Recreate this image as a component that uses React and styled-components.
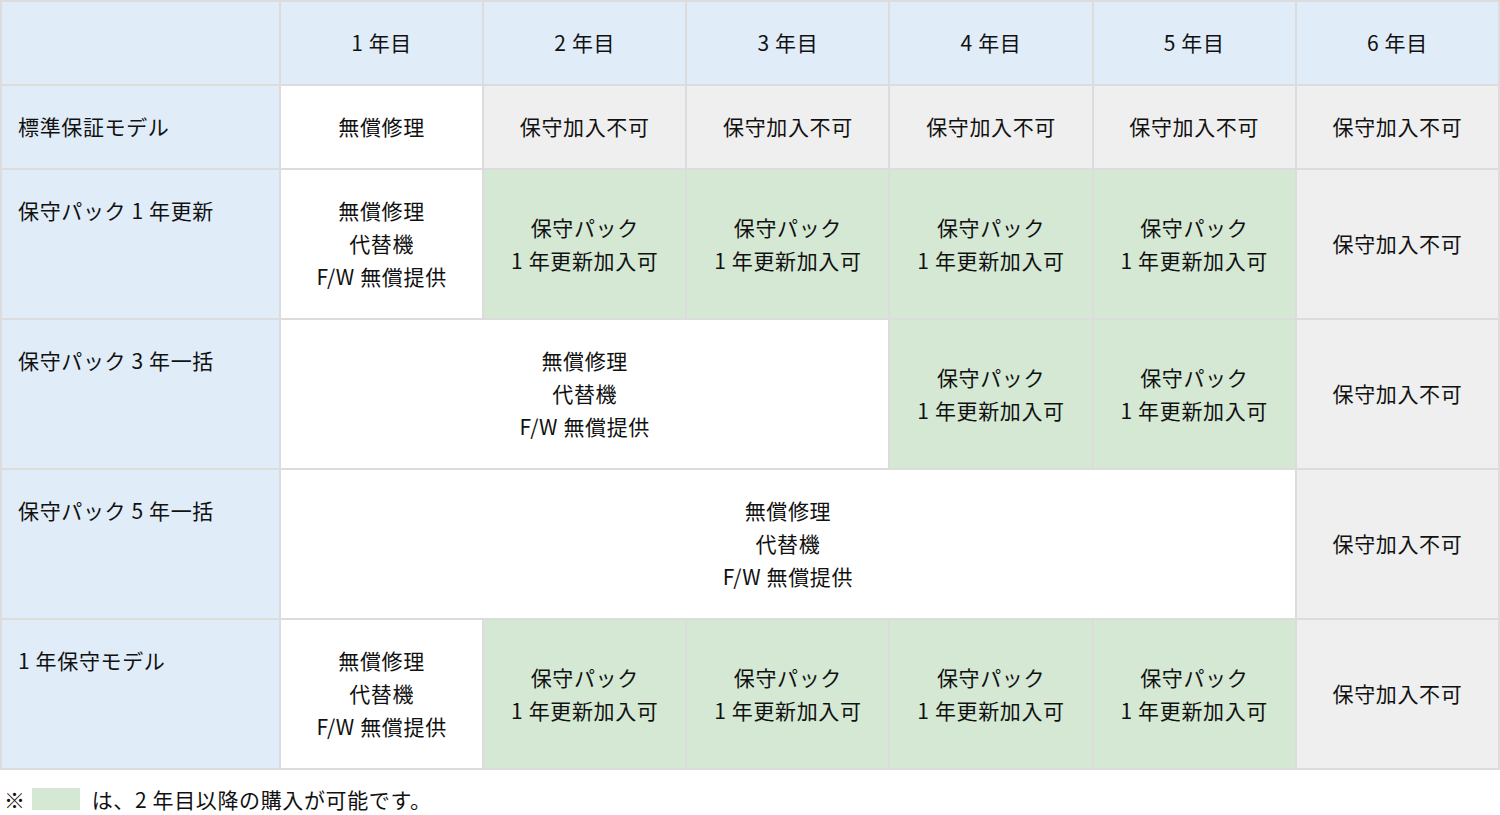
import React from "react";
import styled, { createGlobalStyle } from "styled-components";

const GlobalStyle = createGlobalStyle`
  body {
    margin: 0;
    background: #fff;
    font-family: "Noto Sans CJK JP", "Noto Sans", sans-serif;
    color: #111;
  }
`;

const Table = styled.table`
  width: 1500px;
  border-collapse: collapse;
  table-layout: fixed;
  font-size: 21px;
  line-height: 33px;
  letter-spacing: 0.03em;
`;

const HeadCell = styled.th`
  background: #e0ecf8;
  border: 2px solid #dcdcdc;
  font-weight: normal;
  padding: 24px 0 25px;
  text-align: center;
  vertical-align: middle;
`;

const RowHead = styled.th`
  background: #e0ecf8;
  border: 2px solid #dcdcdc;
  font-weight: normal;
  padding: 24px 16px 25px;
  text-align: left;
  vertical-align: top;
`;

const tones = {
  white: "#ffffff",
  gray: "#efefef",
  green: "#d4e8d4",
};

const Cell = styled.td`
  background: ${(p) => tones[p.$tone || "white"]};
  border: 2px solid #dcdcdc;
  padding: 24px 0 25px;
  text-align: center;
  vertical-align: middle;
`;

const Note = styled.p`
  margin: 16px 0 0 4px;
  font-size: 21px;
  line-height: 26px;
  letter-spacing: 0.03em;
  display: flex;
  align-items: center;
`;

const Swatch = styled.span`
  display: inline-block;
  width: 48px;
  height: 22px;
  background: #d4e8d4;
  margin: 0 12px 0 6px;
`;

const Lines = ({ items }) =>
  items.map((t, i) => (
    <React.Fragment key={i}>
      {i > 0 && <br />}
      {t}
    </React.Fragment>
  ));

const FREE = ["無償修理", "代替機", "F/W 無償提供"];
const PACK = ["保守パック", "1 年更新加入可"];
const NO = "保守加入不可";

export default function App() {
  const years = ["1 年目", "2 年目", "3 年目", "4 年目", "5 年目", "6 年目"];
  return (
    <>
      <GlobalStyle />
      <Table>
        <colgroup>
          <col style={{ width: 279 }} />
          {years.map((y) => (
            <col key={y} />
          ))}
        </colgroup>
        <thead>
          <tr>
            <HeadCell />
            {years.map((y) => (
              <HeadCell key={y}>{y}</HeadCell>
            ))}
          </tr>
        </thead>
        <tbody>
          <tr>
            <RowHead>標準保証モデル</RowHead>
            <Cell>無償修理</Cell>
            <Cell $tone="gray">{NO}</Cell>
            <Cell $tone="gray">{NO}</Cell>
            <Cell $tone="gray">{NO}</Cell>
            <Cell $tone="gray">{NO}</Cell>
            <Cell $tone="gray">{NO}</Cell>
          </tr>
          <tr>
            <RowHead>保守パック 1 年更新</RowHead>
            <Cell><Lines items={FREE} /></Cell>
            {[0, 1, 2, 3].map((i) => (
              <Cell key={i} $tone="green"><Lines items={PACK} /></Cell>
            ))}
            <Cell $tone="gray">{NO}</Cell>
          </tr>
          <tr>
            <RowHead>保守パック 3 年一括</RowHead>
            <Cell colSpan={3}><Lines items={FREE} /></Cell>
            <Cell $tone="green"><Lines items={PACK} /></Cell>
            <Cell $tone="green"><Lines items={PACK} /></Cell>
            <Cell $tone="gray">{NO}</Cell>
          </tr>
          <tr>
            <RowHead>保守パック 5 年一括</RowHead>
            <Cell colSpan={5}><Lines items={FREE} /></Cell>
            <Cell $tone="gray">{NO}</Cell>
          </tr>
          <tr>
            <RowHead>1 年保守モデル</RowHead>
            <Cell><Lines items={FREE} /></Cell>
            {[0, 1, 2, 3].map((i) => (
              <Cell key={i} $tone="green"><Lines items={PACK} /></Cell>
            ))}
            <Cell $tone="gray">{NO}</Cell>
          </tr>
        </tbody>
      </Table>
      <Note>
        ※<Swatch />は、2 年目以降の購入が可能です。
      </Note>
    </>
  );
}
